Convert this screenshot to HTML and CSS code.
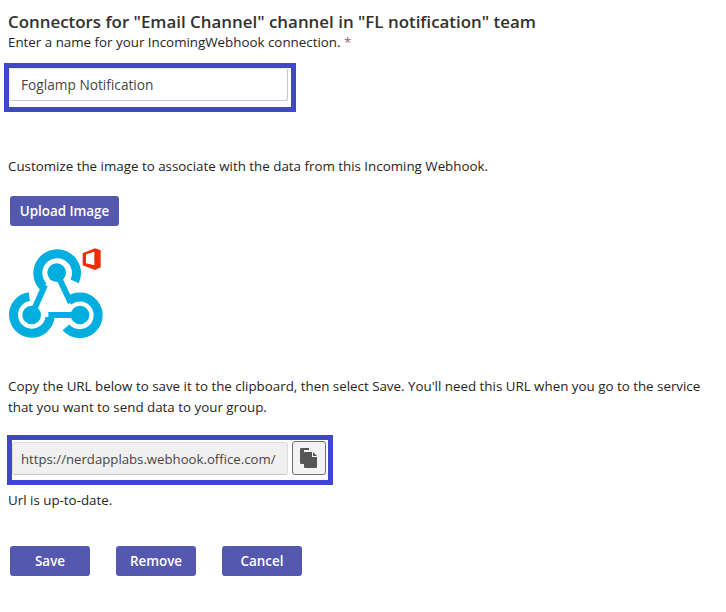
FILE: index.html
```html
<!DOCTYPE html>
<html lang="en">
<head>
<meta charset="utf-8">
<title>Connectors</title>
<link rel="stylesheet" href="styles.css">
</head>
<body>
<main class="page">
  <h1 class="title">Connectors for "Email Channel" channel in "FL notification" team</h1>
  <p class="text">Enter a name for your IncomingWebhook connection. <span class="req">*</span></p>
  <div class="box name-box">
    <div class="field name-field">Foglamp Notification</div>
  </div>
  <p class="text customize">Customize the image to associate with the data from this Incoming Webhook.</p>
  <button class="btn upload" type="button">Upload Image</button>
  <div class="logo">
    <svg width="110" height="105" viewBox="0 0 330 315" aria-hidden="true">
      <g fill="none" stroke="#00afe0" stroke-width="27">
        <path d="M130 140A58 58 0 1 1 224 124"/>
        <path d="M88 170A55 55 0 1 0 150 232"/>
        <path d="M205 183A55 55 0 1 1 198 262"/>
      </g>
      <g fill="none" stroke="#00afe0" stroke-width="18">
        <path d="M170 98L212 188"/>
        <path d="M135 135L95 225"/>
        <path d="M145 225H240"/>
      </g>
      <g fill="#00afe0">
        <circle cx="170" cy="98" r="28"/>
        <circle cx="95" cy="225" r="28"/>
        <circle cx="240" cy="225" r="28"/>
      </g>
      <path fill="#f02c00" fill-rule="evenodd" d="M248 40L285 25L302 31V82L285 90L248 76ZM258 43V70L283 76V35Z"/>
    </svg>
  </div>
  <p class="text copy">Copy the URL below to save it to the clipboard, then select Save. You'll need this URL when you go to the service that you want to send data to your group.</p>
  <div class="box url-box">
    <div class="field url-field">https://nerdapplabs.webhook.office.com/</div>
    <button class="copy-btn" type="button" aria-label="Copy">
      <svg width="18" height="21" viewBox="0 0 18 21" aria-hidden="true">
        <path fill="#555" d="M1 0H9V2H4V16H1Q0 16 0 15V1Q0 0 1 0Z"/>
        <path fill="#555" d="M5 4H12V9H17V19Q17 20 16 20H5Q4 20 4 19V5Q4 4 5 4ZM13 4L17 8H13Z"/>
      </svg>
    </button>
  </div>
  <p class="text status">Url is up-to-date.</p>
  <div class="actions">
    <button class="btn" type="button">Save</button>
    <button class="btn" type="button">Remove</button>
    <button class="btn" type="button">Cancel</button>
  </div>
</main>
</body>
</html>
```
FILE: styles.css
```css
* { box-sizing: border-box; }
html, body { margin: 0; background: #fff; }
body {
  font-family: "Open Sans", "Noto Sans", sans-serif;
  font-size: 13.35px;
  color: #252423;
}
.page { width: 726px; height: 612px; padding-top: 12px; overflow: hidden; }
.title {
  margin: 0 0 0 8px;
  font-size: 16.9px;
  line-height: 20px;
  font-weight: 600;
  color: #323130;
}
.text { margin: 0 0 0 8px; line-height: 21px; }
.req { color: #a4555f; }
.box { display: flex; background: #fff; border: 5px solid #3f48cc; }
.name-box { width: 292px; height: 49px; margin: 10px 0 0 4px; padding-bottom: 6px; }
.field {
  height: 33px;
  padding-left: 12px;
  border-radius: 3px;
  color: #484644;
}
.name-field {
  width: 279px;
  border: 1px solid #e8e8e8;
  border-bottom-color: #c8c6c4;
  border-right-color: #c8c6c4;
  line-height: 31px;
  font-size: 13.7px;
  padding-left: 11px;
}
.customize { margin-top: 44px; }
.btn {
  display: block;
  width: 80px;
  height: 30px;
  padding: 0;
  border: 0;
  border-radius: 3px;
  background: #5558af;
  color: #fff;
  font: 600 13.4px "Open Sans", "Noto Sans", sans-serif;
}
.upload { width: 109px; margin: 19px 0 0 10px; }
.logo { height: 105px; margin-top: 14px; }
.logo svg { display: block; }
.copy { width: 705px; margin-top: 31px; }
.url-box {
  width: 326px;
  height: 50px;
  margin: 17px 0 0 7px;
  padding: 2px 0 0;
  gap: 4px;
}
.url-field {
  width: 276px;
  background: #f0f0f0;
  border: 1px solid #dcdcdc;
  border-bottom-color: #c8c6c4;
  font-size: 13.2px;
  line-height: 33px;
  padding-left: 8px;
}
.copy-btn {
  display: flex;
  align-items: center;
  justify-content: center;
  width: 34px;
  height: 34px;
  padding: 0;
  margin-top: -1px;
  background: #f3f3f3;
  border: 1px solid #6e6e6e;
  border-radius: 3px;
}
.status { margin-top: 5px; }
.actions { display: flex; gap: 26px; margin: 35px 0 0 10px; }
```
